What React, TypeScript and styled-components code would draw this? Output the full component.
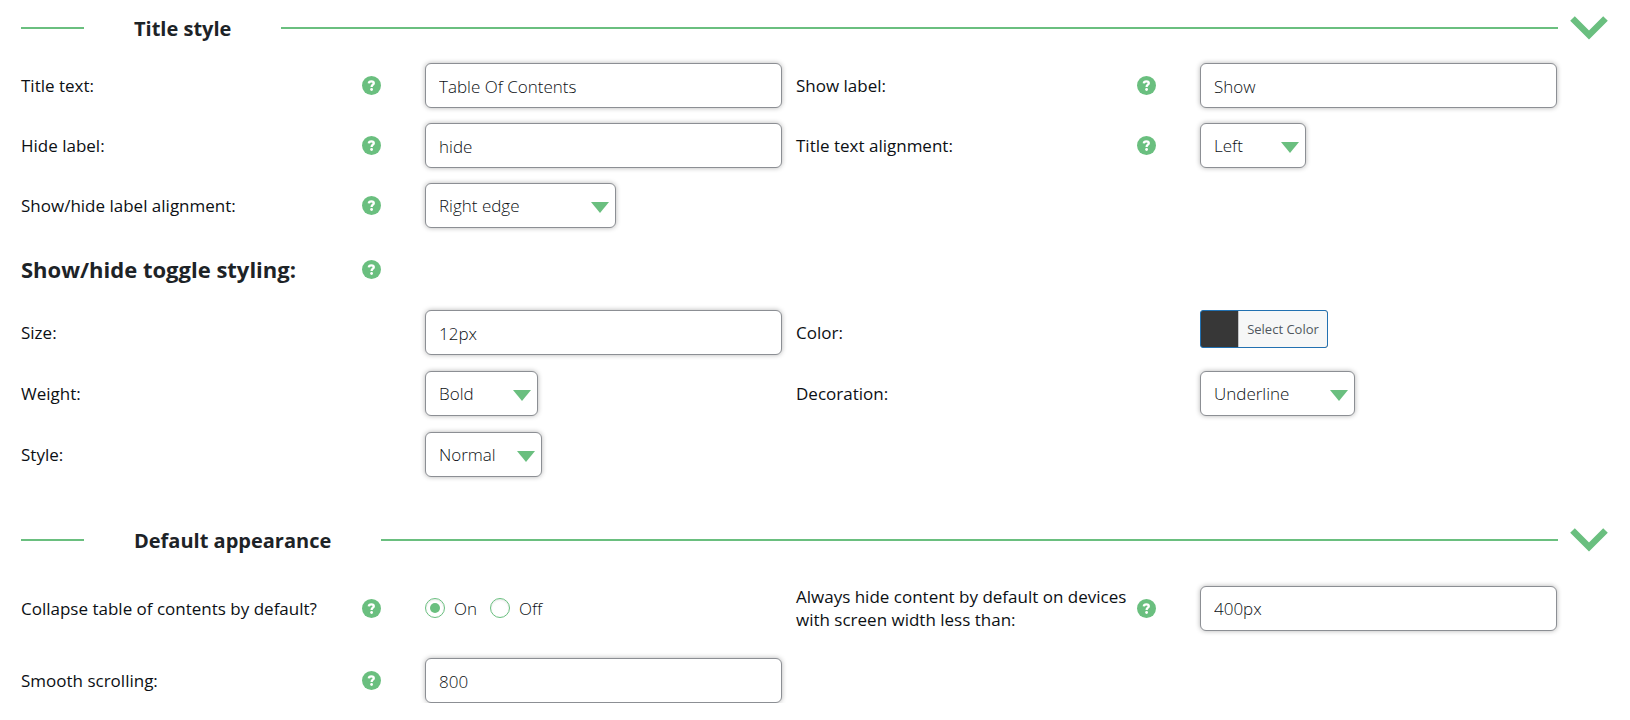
import React, { useState } from 'react';
import styled, { createGlobalStyle } from 'styled-components';

const green = '#6abf7f';

const GlobalStyle = createGlobalStyle`
  * { box-sizing: border-box; }
  body {
    margin: 0;
    background: #fff;
    color: #1d2327;
    font-family: 'Open Sans', 'Noto Sans', sans-serif;
    font-size: 17px;
  }
`;

const Page = styled.main`
  padding: 8px 22px 0 21px;
`;

const Section = styled.section`
  & + & { margin-top: 43px; }
`;

const SectionHeader = styled.header`
  display: flex;
  align-items: center;
  height: 40px;

  &::before {
    content: '';
    width: 63px;
    height: 2px;
    background: ${green};
  }
`;

const SectionTitle = styled.h2`
  margin: 0 50px;
  padding-top: 2px;
  font-size: 20px;
  line-height: 28px;
  font-weight: 700;
`;

const Rule = styled.span`
  flex: 1;
  height: 2px;
  background: ${green};
`;

const CollapseButton = styled.button`
  width: 38px;
  height: 24px;
  margin-left: 12px;
  padding: 0;
  border: 0;
  background: none;
  cursor: pointer;

  svg { display: block; }
`;

const FieldGrid = styled.div<{ $top: number; $rowGap: number }>`
  display: grid;
  grid-template-columns: 1fr 1fr;
  column-gap: 14px;
  row-gap: ${p => p.$rowGap}px;
  margin-top: ${p => p.$top}px;
  margin-right: 51px;
`;

const FieldRow = styled.div`
  display: grid;
  grid-template-columns: 404fr 357fr;
  align-items: center;
  min-height: 45px;
`;

const LabelCell = styled.div`
  display: grid;
  grid-template-columns: 1fr 63px;
  align-items: center;
`;

const LabelText = styled.label`
  color: #0c1014;
  font-size: 17px;
  line-height: 23px;
`;

const HelpButton = styled.button`
  width: 19px;
  height: 19px;
  padding: 0;
  border: 0;
  background: none;
  cursor: help;

  svg { display: block; }
`;

const SubHeading = styled.h3`
  margin: 0;
  font-size: 22px;
  line-height: 30px;
  font-weight: 700;
  white-space: nowrap;
`;

const SubHeadingRow = styled(FieldRow)`
  min-height: 30px;
  grid-column: 1;
`;

const boxLook = `
  height: 45px;
  border: 1px solid #8c8f94;
  border-radius: 6px;
  background: #fff;
  box-shadow: 0 0 5px rgba(0, 0, 0, 0.3);
  color: #0c1014;
  font-family: inherit;
  font-size: 17px;
  font-weight: 300;
`;

const TextInput = styled.input`
  ${boxLook}
  width: 100%;
  padding: 1px 13px 0;
`;

const SelectWrap = styled.div<{ $width: number }>`
  position: relative;
  width: ${p => p.$width}px;

  &::after {
    content: '';
    position: absolute;
    top: 19px;
    right: 7px;
    width: 18px;
    height: 11px;
    background: ${green};
    clip-path: polygon(0 0, 100% 0, 50% 100%);
    pointer-events: none;
  }
`;

const SelectBox = styled.select`
  ${boxLook}
  display: block;
  width: 100%;
  padding: 0 24px 0 13px;
  appearance: none;
`;

const ColorButton = styled.button`
  display: flex;
  width: 128px;
  height: 38px;
  margin-bottom: 7px;
  padding: 0;
  overflow: hidden;
  border: 1px solid #2271b1;
  border-radius: 3px;
  background: #373737;
  cursor: pointer;
`;

const ColorButtonText = styled.span`
  flex: 1;
  margin-left: 37px;
  border-left: 1px solid #c3c4c7;
  background: #f6f7f7;
  color: #50575e;
  font: 400 13px/37px 'Open Sans', 'Noto Sans', sans-serif;
  text-align: center;
  white-space: nowrap;
`;

const RadioGroup = styled.div`
  display: flex;
  align-items: center;
  gap: 13px;
`;

const RadioLabel = styled.label`
  display: flex;
  align-items: center;
  gap: 9px;
  font-weight: 300;
  color: #0c1014;
`;

const Radio = styled.input`
  appearance: none;
  display: grid;
  place-items: center;
  width: 20px;
  height: 20px;
  margin: 0;
  border: 1px solid ${green};
  border-radius: 50%;
  background: #fff;
  box-shadow: inset 0 1px 2px rgba(0, 0, 0, 0.1);

  &:checked::before {
    content: '';
    width: 10px;
    height: 10px;
    border-radius: 50%;
    background: ${green};
  }
`;

function Help({ topic }: { topic: string }) {
  return (
    <HelpButton type="button" aria-label={`Help: ${topic}`}>
      <svg width="19" height="19" viewBox="0 0 19 19">
        <circle cx="9.5" cy="9.5" r="9.5" fill={green} />
        <path d="M6.8 7.4C6.9 5.900 8 5.300 9.400 5.300s2.400.7 2.400 1.900c0 1.500-2.200 1.600-2.200 3.700" fill="none" stroke="#fff" strokeWidth="2.300" />
        <circle cx="9.600" cy="13.500" r="1.400" fill="#fff" />
      </svg>
    </HelpButton>
  );
}

function Field({ id, label, help, children }: { id: string; label: string; help?: boolean; children: React.ReactNode }) {
  return (
    <FieldRow>
      <LabelCell>
        <LabelText htmlFor={id}>{label}</LabelText>
        {help && <Help topic={label} />}
      </LabelCell>
      {children}
    </FieldRow>
  );
}

function Select({ id, width, options }: { id: string; width: number; options: string[] }) {
  return (
    <SelectWrap $width={width}>
      <SelectBox id={id}>
        {options.map(o => <option key={o}>{o}</option>)}
      </SelectBox>
    </SelectWrap>
  );
}

function Header({ title }: { title: string }) {
  return (
    <SectionHeader>
      <SectionTitle>{title}</SectionTitle>
      <Rule />
      <CollapseButton type="button" aria-label={`Collapse ${title}`}>
        <svg width="38" height="24" viewBox="0 0 38 24">
          <path d="M2.500 2.500L19 19L35.500 2.500" fill="none" stroke={green} strokeWidth="6.500" />
        </svg>
      </CollapseButton>
    </SectionHeader>
  );
}

export default function App() {
  const [collapse, setCollapse] = useState('on');

  return (
    <Page>
      <GlobalStyle />
      <Section>
        <Header title="Title style" />
        <FieldGrid $top={15} $rowGap={15}>
          <Field id="title-text" label="Title text:" help>
            <TextInput id="title-text" defaultValue="Table Of Contents" />
          </Field>
          <Field id="show-label" label="Show label:" help>
            <TextInput id="show-label" defaultValue="Show" />
          </Field>
          <Field id="hide-label" label="Hide label:" help>
            <TextInput id="hide-label" defaultValue="hide" />
          </Field>
          <Field id="title-align" label="Title text alignment:" help>
            <Select id="title-align" width={106} options={['Left', 'Center', 'Right']} />
          </Field>
          <Field id="toggle-align" label="Show/hide label alignment:" help>
            <Select id="toggle-align" width={191} options={['Right edge', 'Next to title']} />
          </Field>
        </FieldGrid>
        <FieldGrid $top={26} $rowGap={15}>
          <SubHeadingRow>
            <LabelCell>
              <SubHeading>Show/hide toggle styling:</SubHeading>
              <Help topic="Show/hide toggle styling" />
            </LabelCell>
          </SubHeadingRow>
        </FieldGrid>
        <FieldGrid $top={26} $rowGap={16}>
          <Field id="size" label="Size:">
            <TextInput id="size" defaultValue="12px" />
          </Field>
          <Field id="color" label="Color:">
            <ColorButton id="color" type="button">
              <ColorButtonText>Select Color</ColorButtonText>
            </ColorButton>
          </Field>
          <Field id="weight" label="Weight:">
            <Select id="weight" width={113} options={['Bold', 'Normal']} />
          </Field>
          <Field id="decoration" label="Decoration:">
            <Select id="decoration" width={155} options={['Underline', 'None']} />
          </Field>
          <Field id="style" label="Style:">
            <Select id="style" width={117} options={['Normal', 'Italic']} />
          </Field>
        </FieldGrid>
      </Section>
      <Section>
        <Header title="Default appearance" />
        <FieldGrid $top={25} $rowGap={27}>
          <Field id="collapse-on" label="Collapse table of contents by default?" help>
            <RadioGroup role="radiogroup" aria-label="Collapse table of contents by default?">
              <RadioLabel>
                <Radio id="collapse-on" type="radio" name="collapse" checked={collapse === 'on'} onChange={() => setCollapse('on')} />
                On
              </RadioLabel>
              <RadioLabel>
                <Radio type="radio" name="collapse" checked={collapse === 'off'} onChange={() => setCollapse('off')} />
                Off
              </RadioLabel>
            </RadioGroup>
          </Field>
          <Field id="hide-width" label="Always hide content by default on devices with screen width less than:" help>
            <TextInput id="hide-width" defaultValue="400px" />
          </Field>
          <Field id="scrolling" label="Smooth scrolling:" help>
            <TextInput id="scrolling" defaultValue="800" />
          </Field>
        </FieldGrid>
      </Section>
    </Page>
  );
}
